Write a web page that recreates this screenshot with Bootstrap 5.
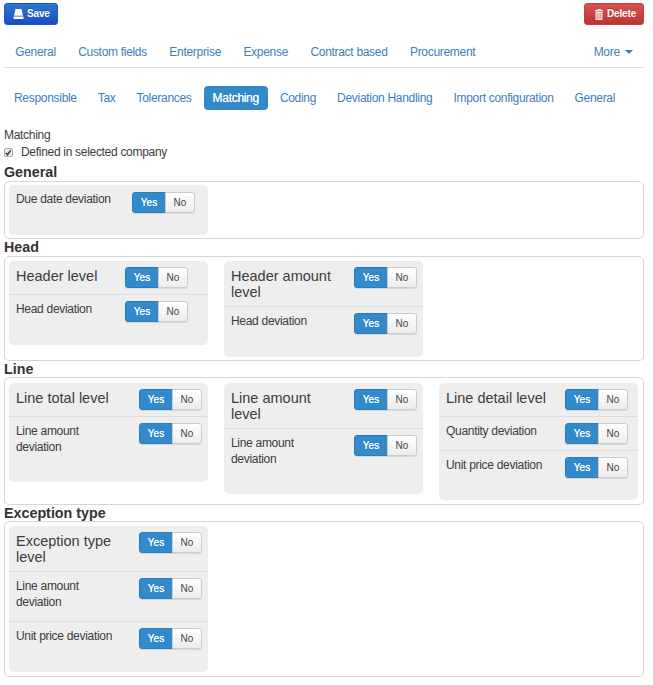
<!DOCTYPE html>
<html lang="en">
<head>
<meta charset="utf-8">
<meta name="viewport" content="width=device-width, initial-scale=1">
<title>Matching</title>
<link rel="stylesheet" href="https://cdn.jsdelivr.net/npm/bootstrap@5.3.0/dist/css/bootstrap.min.css">
<style>
body{font:12px/16px "Liberation Sans",Arial,sans-serif;letter-spacing:-.3px;color:#3c3c3c;background:#fff}
.page{padding:3px 9px 0 4px}
.tool{height:22px;padding:0 8px 0 8px;border-radius:3px;font-size:10px;letter-spacing:-.15px;font-weight:700;line-height:20px;color:#fff!important;text-shadow:0 -1px 0 rgba(0,0,0,.25);display:flex;align-items:center;gap:3px}
.tool svg{flex-shrink:0}
.tool-save{background:linear-gradient(#2a7bcd,#2049c6);border:1px solid #2158bd;width:54px}
.tool-del{background:linear-gradient(#dc5351,#b93532);border:1px solid #bf4340;width:60px;padding-left:9px}
.tabs-main{height:43px;border-bottom:1px solid #ddd;--bs-nav-link-color:#3c80b8;--bs-nav-link-hover-color:#3c80b8}
.tabs-sub{height:24px;margin-top:18px;padding-left:1px;--bs-nav-link-color:#3c80b8}
.tabs-main .nav-link{padding:19px 11.2px 0;font-size:12px;white-space:nowrap}
.tabs-sub .nav-link{padding:4px 9px;font-size:12px;white-space:nowrap;border-radius:4px;margin-right:3px}
.tabs-sub .nav-link.active{background:#338acb;color:#fff;text-shadow:0 0 .5px #fff}
.dropdown-toggle::after{border-top-width:4px;border-left-width:4px;border-right-width:4px;vertical-align:2px;margin-left:5px}
.intro{margin-top:17px}
.defined{padding-top:1px;margin-bottom:-1px}
.tick{width:9px;height:9px;border:1px solid #aaa;border-radius:2px;background:#e9e9e9;margin-right:8px}
.sect{font-size:14.3px;letter-spacing:0;font-weight:700;line-height:16px;margin:0;color:#333}
.s1{margin-top:5px;line-height:17px}
.s2{line-height:17px}
.frame{border:1px solid #d6d6d6;border-radius:5px;padding:4px;gap:16px}
.f1{height:58px;padding-top:3px}.f2{height:105px}.f3{height:128px;padding-top:5px}.f4{height:156px}
.panel{width:199px;background:#eee;border-radius:5px}
.opt{padding:6px 0 0 7px}
.opt+.opt{border-top:1px solid #ddd}
.opt-name{white-space:nowrap}
.opt-level{font-size:14.5px;letter-spacing:0;padding-top:1px}
.w116 .opt-name{width:116px}.w123 .opt-name{width:109px}.w130 .opt-name{width:123px}.w125 .opt-name{width:119px}
.w116 .yn{margin-top:1px}
.yn{height:21px;box-shadow:0 1px 1px rgba(0,0,0,.1);border-radius:3px}
.yn .btn{font-size:10px;letter-spacing:0;line-height:19px;padding:0;border-radius:3px;width:30px;border:1px solid #ccc;color:#444;background:linear-gradient(#fff,#ececec)}
.yn .btn.on{width:34px;border-color:#2b7dbb;background:#338acb;color:#fff;text-shadow:0 0 .6px #fff}
.h33{height:33px}.h34{height:34px}.h45{height:45px}.h50{height:50px}.h51{height:51px}.h66{height:66px}
</style>
<script src="https://cdn.jsdelivr.net/npm/bootstrap@5.3.0/dist/js/bootstrap.bundle.min.js"></script>
</head>
<body>
<main class="page">
<div class="d-flex justify-content-between">
<button class="btn tool tool-save"><svg width="11" height="11" viewBox="0 0 11 11" fill="#fff"><path d="M2.5 0h6L10 6.8H1zM.5 7.5h10V10h-10z"/></svg>Save</button>
<button class="btn tool tool-del"><svg width="10" height="11" viewBox="0 0 10 11" fill="#fadddd"><path d="M3.2 0h3.6v1H9v1.5H1V1h2.2zM1.5 3h7v8h-7z"/><path d="M3.3 4v6M5 4v6M6.7 4v6" stroke="#cd4e4c" stroke-width=".5"/></svg>Delete</button>
</div>
<nav class="nav tabs-main flex-nowrap">
<a class="nav-link">General</a><a class="nav-link">Custom fields</a><a class="nav-link">Enterprise</a><a class="nav-link">Expense</a><a class="nav-link">Contract based</a><a class="nav-link">Procurement</a><a class="nav-link dropdown-toggle ms-auto">More</a>
</nav>
<nav class="nav nav-pills tabs-sub flex-nowrap">
<a class="nav-link">Responsible</a><a class="nav-link">Tax</a><a class="nav-link">Tolerances</a><a class="nav-link active">Matching</a><a class="nav-link">Coding</a><a class="nav-link">Deviation Handling</a><a class="nav-link">Import configuration</a><a class="nav-link">General</a>
</nav>
<div class="intro">Matching</div>
<label class="d-flex align-items-center defined"><span class="tick d-flex"><svg width="8" height="8" viewBox="0 0 8 8"><path d="M1 3.8 2.8 6 6.5 1" fill="none" stroke="#333" stroke-width="1.6"/></svg></span>Defined in selected company</label>

<h2 class="sect s1">General</h2>
<section class="frame f1 d-flex align-items-start">
<div class="panel w116"><div class="opt d-flex align-items-start h50"><div class="opt-name">Due date deviation</div><div class="btn-group yn"><button class="btn on">Yes</button><button class="btn">No</button></div></div></div>
</section>

<h2 class="sect s2">Head</h2>
<section class="frame f2 d-flex align-items-start">
<div class="panel w123"><div class="opt d-flex align-items-start h33"><div class="opt-name opt-level">Header level</div><div class="btn-group yn"><button class="btn on">Yes</button><button class="btn">No</button></div></div>
<div class="opt d-flex align-items-start h51"><div class="opt-name">Head deviation</div><div class="btn-group yn"><button class="btn on">Yes</button><button class="btn">No</button></div></div></div>
<div class="panel w130"><div class="opt d-flex align-items-start h45"><div class="opt-name opt-level">Header amount<br>level</div><div class="btn-group yn"><button class="btn on">Yes</button><button class="btn">No</button></div></div>
<div class="opt d-flex align-items-start h51"><div class="opt-name">Head deviation</div><div class="btn-group yn"><button class="btn on">Yes</button><button class="btn">No</button></div></div></div>
</section>

<h2 class="sect s3">Line</h2>
<section class="frame f3 d-flex align-items-start">
<div class="panel w130"><div class="opt d-flex align-items-start h33"><div class="opt-name opt-level">Line total level</div><div class="btn-group yn"><button class="btn on">Yes</button><button class="btn">No</button></div></div>
<div class="opt d-flex align-items-start h66"><div class="opt-name">Line amount<br>deviation</div><div class="btn-group yn"><button class="btn on">Yes</button><button class="btn">No</button></div></div></div>
<div class="panel w130"><div class="opt d-flex align-items-start h45"><div class="opt-name opt-level">Line amount<br>level</div><div class="btn-group yn"><button class="btn on">Yes</button><button class="btn">No</button></div></div>
<div class="opt d-flex align-items-start h66"><div class="opt-name">Line amount<br>deviation</div><div class="btn-group yn"><button class="btn on">Yes</button><button class="btn">No</button></div></div></div>
<div class="panel w125"><div class="opt d-flex align-items-start h33"><div class="opt-name opt-level">Line detail level</div><div class="btn-group yn"><button class="btn on">Yes</button><button class="btn">No</button></div></div>
<div class="opt d-flex align-items-start h34"><div class="opt-name">Quantity deviation</div><div class="btn-group yn"><button class="btn on">Yes</button><button class="btn">No</button></div></div>
<div class="opt d-flex align-items-start h50"><div class="opt-name">Unit price deviation</div><div class="btn-group yn"><button class="btn on">Yes</button><button class="btn">No</button></div></div></div>
</section>

<h2 class="sect s4">Exception type</h2>
<section class="frame f4 d-flex align-items-start">
<div class="panel w130"><div class="opt d-flex align-items-start h45"><div class="opt-name opt-level">Exception type<br>level</div><div class="btn-group yn"><button class="btn on">Yes</button><button class="btn">No</button></div></div>
<div class="opt d-flex align-items-start h50"><div class="opt-name">Line amount<br>deviation</div><div class="btn-group yn"><button class="btn on">Yes</button><button class="btn">No</button></div></div>
<div class="opt d-flex align-items-start h51"><div class="opt-name">Unit price deviation</div><div class="btn-group yn"><button class="btn on">Yes</button><button class="btn">No</button></div></div></div>
</section>
</main>
</body>
</html>
